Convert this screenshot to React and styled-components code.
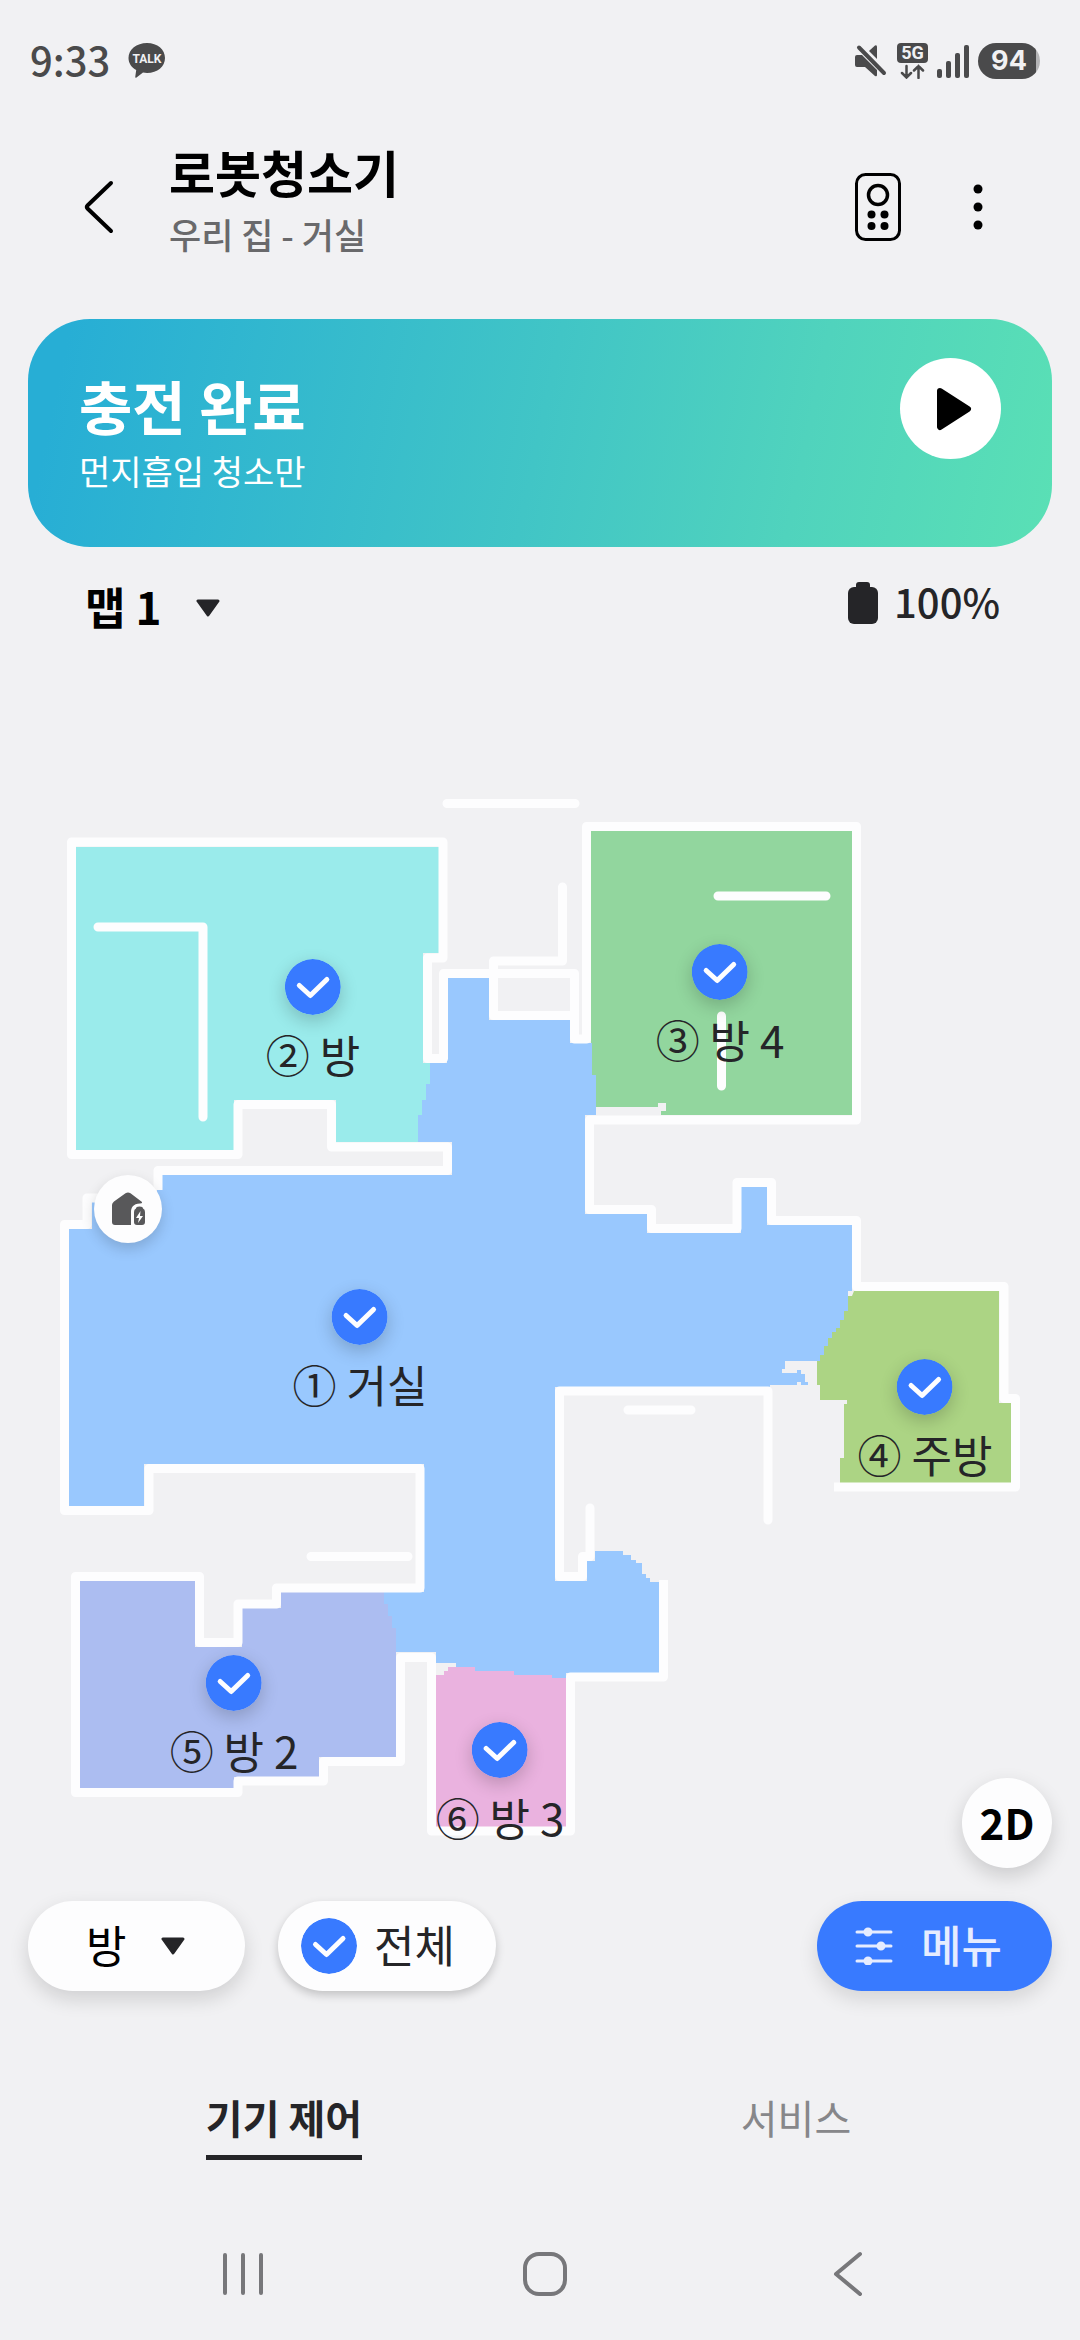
import React, { useState } from "react";
import styled, { createGlobalStyle } from "styled-components";

const ROOM_LIST = [
  { id: "living", label: "① 거실", x: 360, y: 1317 },
  { id: "room1", label: "② 방", x: 313, y: 987 },
  { id: "room4", label: "③ 방 4", x: 720, y: 972 },
  { id: "kitchen", label: "④ 주방", x: 925, y: 1387 },
  { id: "room2", label: "⑤ 방 2", x: 234, y: 1683 },
  { id: "room3", label: "⑥ 방 3", x: 500, y: 1750 },
];

const TAB_LIST = [
  { id: "control", title: "기기 제어" },
  { id: "service", title: "서비스" },
];

// map canvas, in map units
const MAP = { top: 639, width: 1080, height: 1262 };

const left = (x) => `${(x / MAP.width) * 100}%`;
const top = (y) => `${((y - MAP.top) / MAP.height) * 100}%`;

export default function App() {
  const [selected, setSelected] = useState(ROOM_LIST.map((room) => room.id));
  const [tab, setTab] = useState("control");
  const allSelected = selected.length === ROOM_LIST.length;

  const toggle = (id) =>
    setSelected((prev) =>
      prev.includes(id) ? prev.filter((item) => item !== id) : [...prev, id]
    );

  return (
    <Page>
      <GlobalStyle />
      <StatusBar>
        <StatusGroup $gap={18}>
          <Clock>9:33</Clock>
          <TalkIcon />
        </StatusGroup>
        <StatusGroup $gap={9}>
          <MuteIcon />
          <NetworkIcon />
          <SignalIcon />
          <PhoneBattery>94</PhoneBattery>
        </StatusGroup>
      </StatusBar>

      <Header>
        <IconButton aria-label="뒤로">
          <svg width="32" height="56" viewBox="0 0 32 56">
            <path d="M28 4 4.500 26.500Q3 28 4.500 29.500L28 52" fill="none" stroke="#000" strokeWidth="4" strokeLinecap="round" />
          </svg>
        </IconButton>
        <TitleBlock>
          <Title>로봇청소기</Title>
          <Subtitle>우리 집 - 거실</Subtitle>
        </TitleBlock>
        <HeaderActions>
          <IconButton aria-label="리모컨">
            <RemoteIcon />
          </IconButton>
          <IconButton aria-label="더보기">
            <svg width="10" height="46" viewBox="0 0 10 46">
              <circle cx="5" cy="5" r="4.500" />
              <circle cx="5" cy="23" r="4.500" />
              <circle cx="5" cy="41" r="4.500" />
            </svg>
          </IconButton>
        </HeaderActions>
      </Header>

      <Banner>
        <BannerText>
          <BannerTitle>충전 완료</BannerTitle>
          <BannerSub>먼지흡입 청소만</BannerSub>
        </BannerText>
        <PlayButton aria-label="시작">
          <svg width="36" height="44" viewBox="0 0 36 44">
            <path d="M4 4 32 22 4 40Z" stroke="#000" strokeWidth="6" strokeLinejoin="round" />
          </svg>
        </PlayButton>
      </Banner>

      <MapToolbar>
        <SelectLabel>
          <Select aria-label="맵 선택" $bold>
            <option>맵 1</option>
          </Select>
          <ArrowIcon />
        </SelectLabel>
        <BatteryInfo>
          <svg width="30" height="42" viewBox="0 0 30 42" fill="#252528">
            <rect x="8" width="14" height="10" rx="3" />
            <rect y="5" width="30" height="37" rx="6" />
          </svg>
          <BatteryValue>100%</BatteryValue>
        </BatteryInfo>
      </MapToolbar>

      <MapArea>
        <FloorPlan />
        <Dock style={{ left: left(128), top: top(1209) }}>
          <DockIcon />
        </Dock>
        {ROOM_LIST.map((room) => (
          <Pin key={room.id} style={{ left: left(room.x), top: top(room.y) }}>
            <HiddenCheck
              type="checkbox"
              checked={selected.includes(room.id)}
              onChange={() => toggle(room.id)}
            />
            <CheckIcon checked={selected.includes(room.id)} shadow />
            <PinLabel>{room.label}</PinLabel>
          </Pin>
        ))}
        <ViewButton>2D</ViewButton>
      </MapArea>

      <Controls>
        <RoomSelect>
          <Select aria-label="청소 영역">
            <option>방</option>
          </Select>
          <ArrowIcon />
        </RoomSelect>
        <AllCheck>
          <HiddenCheck
            type="checkbox"
            checked={allSelected}
            onChange={() => setSelected(allSelected ? [] : ROOM_LIST.map((room) => room.id))}
          />
          <CheckIcon checked={allSelected} />
          <PillText>전체</PillText>
        </AllCheck>
        <MenuButton>
          <SlidersIcon />
          <PillText>메뉴</PillText>
        </MenuButton>
      </Controls>

      <Tabs role="tablist">
        {TAB_LIST.map((item) => (
          <Tab
            key={item.id}
            role="tab"
            aria-selected={tab === item.id}
            $active={tab === item.id}
            onClick={() => setTab(item.id)}
          >
            <TabText>{item.title}</TabText>
          </Tab>
        ))}
      </Tabs>

      <SystemNav>
        <IconButton aria-label="최근 앱">
          <svg width="44" height="44" viewBox="0 0 44 44">
            <path d="M4 3V41M22 3V41M40 3V41" stroke="#77777a" strokeWidth="4" strokeLinecap="round" />
          </svg>
        </IconButton>
        <IconButton aria-label="홈">
          <svg width="46" height="46" viewBox="0 0 46 46">
            <rect x="3" y="3" width="40" height="40" rx="14" fill="none" stroke="#77777a" strokeWidth="4" />
          </svg>
        </IconButton>
        <IconButton aria-label="이전">
          <svg width="30" height="46" viewBox="0 0 30 46">
            <path d="M27 3 3 23 27 43" fill="none" stroke="#77777a" strokeWidth="4" strokeLinecap="round" strokeLinejoin="round" />
          </svg>
        </IconButton>
      </SystemNav>
    </Page>
  );
}

function FloorPlan() {
  return (
    <Plan viewBox={`0 ${MAP.top} ${MAP.width} ${MAP.height}`} role="img" aria-label="청소 맵">
      {/* living room */}
      <path
        fill="#99c8fe"
        d="M447 978H489V1020H570V1043H592V1075H596V1115H585V1214H647V1233H741V1187H767V1225H852V1291H848V1311H844V1320H840V1328H836V1332H832V1338H828V1346H824V1355H820V1361H785V1369H782V1373H797V1370H801V1374H805V1382H808V1385H801V1382H797V1385H770V1387H555V1581H587V1561H595V1551H623V1555H631V1560H636V1563H642V1574H646V1578H650V1582H659V1673H566V1680H456V1663H436V1652H396V1628H392V1616H388V1604H384V1592H424V1464H144V1506H69V1229H92V1202H157V1175H452V1142H418V1115H422V1100H426V1084H430V1063H447Z"
      />
      {/* room 1 */}
      <path
        fill="#9aebeb"
        d="M76 847H439V953H423V1063H430V1084H426V1100H422V1115H418V1142H336V1100H234V1150H76Z"
      />
      {/* room 4 */}
      <path fill="#92d69e" d="M591 831H852V1115H661V1111H666V1103H658V1107H596V1075H592V1043H591Z" />
      {/* kitchen */}
      <path
        fill="#acd484"
        d="M854 1291H999V1403H1011V1483H840V1458H844V1404H847V1400H820V1385H817V1361H820V1355H824V1346H828V1338H832V1332H836V1328H840V1320H844V1311H848V1296H852Z"
      />
      {/* room 2 */}
      <path
        fill="#acbdf1"
        d="M80 1581H195V1647H242V1608H281V1592H384V1604H388V1616H392V1628H396V1757H319V1777H234V1788H80Z"
      />
      {/* room 3 */}
      <path
        fill="#eab2df"
        d="M436 1675H444V1671H448V1667H475V1671H514V1675H552V1678H566V1827H436Z"
      />
      <g fill="none" stroke="#fdfdfe" strokeWidth="9" strokeLinejoin="round">
        <path d="M158 1190V1170.500H447.500V1147H331.500V1104.500H238V1154.500H71.500V842H443V958H427.500V1058.500H443.500V973.500H574.500V1039H586.500V826.500H856.500V1120H589.500V1209.500H651.500V1228.500H737V1182.500H771.500V1220.500H856.500V1286.500H1004V1398.500H1015.500V1487H834" />
        <path d="M125 1198H87V1224.500H64.500V1510.500H149V1468.500H420V1588H276.500V1604H238V1642.500H199.500V1576.500H75.500V1792.500H238V1781H323.500V1761.500H400.500V1657.500H431.500V1831H570.500V1677H663.500V1580" />
        <path d="M768 1520V1391H559.500V1576.500H582.500V1556.500H590V1508" strokeLinecap="round" />
        <path d="M562.500 887V961H493.500V1015.500H574" strokeLinecap="round" />
        <path
          d="M447 803.500H575M98 927H203V1117M718 896H826M721.500 1016V1086M311 1556.500H408M628 1410H691"
          strokeLinecap="round"
        />
      </g>
    </Plan>
  );
}

function CheckIcon({ checked, shadow }) {
  return (
    <CheckSvg viewBox="0 0 56 56" $shadow={shadow}>
      <circle cx="28" cy="28" r="28" fill={checked ? "#387aff" : "#b4b8c0"} />
      <path d="M14.500 26.500 25.500 36.500 42 20.500" fill="none" stroke="#fdfdff" strokeWidth="5" strokeLinecap="round" strokeLinejoin="round" />
    </CheckSvg>
  );
}

function ArrowIcon() {
  return (
    <svg width="24" height="18" viewBox="0 0 24 18">
      <path d="M2 2H22L12 16Z" fill="#252528" stroke="#252528" strokeWidth="3" strokeLinejoin="round" />
    </svg>
  );
}

function RemoteIcon() {
  return (
    <svg width="46" height="68" viewBox="0 0 46 68">
      <rect x="1.500" y="1.500" width="43" height="65" rx="9" fill="none" stroke="#000" strokeWidth="3" />
      <circle cx="23" cy="22" r="9.500" fill="none" stroke="#000" strokeWidth="3.500" />
      <circle cx="16.500" cy="41.500" r="4" />
      <circle cx="29.500" cy="41.500" r="4" />
      <circle cx="16.500" cy="53" r="4" />
      <circle cx="29.500" cy="53" r="4" />
    </svg>
  );
}

function SlidersIcon() {
  return (
    <svg width="38" height="38" viewBox="0 0 38 38" fill="#e6ecff" stroke="#e6ecff" strokeWidth="3" strokeLinecap="round">
      <path d="M2 5H36M2 19H36M2 34H36" />
      <circle cx="13" cy="5" r="3" />
      <circle cx="26" cy="19" r="3" />
      <circle cx="13" cy="34" r="3" />
    </svg>
  );
}

function DockIcon() {
  return (
    <svg width="34" height="34" viewBox="0 0 34 34">
      <path d="M1 13Q1 11 3 9.500L14.500 1.200Q17 -.3 19.500 1.200L31 10Q31.500 11.500 29 11.500C22 11.500 20 16 20 20V33H4Q1 33 1 30Z" fill="#58585a" />
      <path d="M25 16.500Q25 14.500 28.500 14.500T32 16.500Q34 17 34 20V30Q34 33 31 33H26Q23 33 23 30V20Q23 17 25 16.500Z" fill="#58585a" />
      <path d="M29.500 19 25 26H28L27 31 32 24H29Z" fill="#fff" />
    </svg>
  );
}

function TalkIcon() {
  return (
    <svg width="38" height="36" viewBox="0 0 38 36">
      <path d="M19 0C29.500 0 37 6.500 37 15S29.500 30 19 30Q17 30 15 29.600L8.500 34.500Q7 35.500 7.300 33.500L8.200 27C3.500 24.500.5 20 .5 15 .5 6.500 8.500 0 19 0Z" fill="#4a4a4b" />
      <text x="19" y="20" textAnchor="middle" fontFamily="Roboto, sans-serif" fontWeight="700" fontSize="12" fill="#f1f1f3">
        TALK
      </text>
    </svg>
  );
}

function MuteIcon() {
  return (
    <svg width="34" height="34" viewBox="0 0 34 34">
      <path d="M1 13Q1 11 3 11H8L23 26V31Q23 33 21 32L11 23H3Q1 23 1 21Z" fill="#4a4a4b" />
      <path d="M15 7 21 1.500Q23 .5 23 3V15Z" fill="#4a4a4b" />
      <path d="M5 3.500 30 29" stroke="#4a4a4b" strokeWidth="4" strokeLinecap="round" />
    </svg>
  );
}

function NetworkIcon() {
  return (
    <svg width="31" height="36" viewBox="0 0 31 36">
      <rect width="31" height="20" rx="4" fill="#4a4a4b" />
      <text x="15.500" y="16" textAnchor="middle" fontFamily="Roboto, sans-serif" fontWeight="700" fontSize="18" fill="#f1f1f3">
        5G
      </text>
      <path d="M9.500 23V34M5 30 9.500 34.500 14 30M21.500 35V23M17 27.500 21.500 23 26 27.500" fill="none" stroke="#4a4a4b" strokeWidth="2.500" strokeLinecap="round" />
    </svg>
  );
}

function SignalIcon() {
  return (
    <svg width="32" height="34" viewBox="0 0 32 34" fill="#4a4a4b">
      <rect x="0" y="25" width="5" height="9" rx="2" />
      <rect x="9" y="17" width="5" height="17" rx="2" />
      <rect x="18" y="9" width="5" height="25" rx="2" />
      <rect x="27" y="1" width="5" height="33" rx="2" />
    </svg>
  );
}

const GlobalStyle = createGlobalStyle`
  * {
    box-sizing: border-box;
  }
  body {
    margin: 0;
    background-color: #f1f1f3;
  }
  body, button, select, input {
    font-family: "Noto Sans CJK KR", sans-serif;
  }
  svg {
    display: block;
    flex-shrink: 0;
  }
`;

const Page = styled.main`
  min-height: 100vh;
  display: flex;
  flex-direction: column;
  background-color: #f1f1f3;
  color: #252528;
`;

const StatusBar = styled.div`
  display: flex;
  justify-content: space-between;
  align-items: center;
  height: 122px;
  padding: 0 40px 0 30px;
`;

const StatusGroup = styled.div`
  display: flex;
  align-items: center;
  gap: ${({ $gap }) => $gap}px;
`;

const Clock = styled.span`
  padding-bottom: 4px;
  font-size: 40px;
  font-weight: 500;
  line-height: 60px;
  color: #4a4a4b;
`;

const PhoneBattery = styled.span`
  width: 62px;
  border-radius: 18px;
  background: linear-gradient(90deg, #4a4a4b 93%, #b4b4b6 93%);
  color: #f1f1f3;
  font-family: Inter, sans-serif;
  font-size: 27px;
  font-weight: 700;
  line-height: 36px;
  text-align: center;
`;

const IconButton = styled.button`
  display: flex;
  justify-content: center;
  align-items: center;
  padding: 0;
  border: 0;
  background: none;
  cursor: pointer;
`;

const Header = styled.header`
  display: flex;
  align-items: center;
  padding: 22px 97px 49px 83px;
`;

const TitleBlock = styled.div`
  flex: 1;
  padding-left: 54px;
`;

const Title = styled.h1`
  margin: 0;
  font-size: 50px;
  font-weight: 700;
  line-height: 54px;
  color: #000;
`;

const Subtitle = styled.p`
  margin: 0;
  font-size: 35px;
  font-weight: 500;
  line-height: 72px;
  color: #69696b;
`;

const HeaderActions = styled.div`
  display: flex;
  align-items: center;
  gap: 72px;
`;

const Banner = styled.section`
  display: flex;
  justify-content: space-between;
  align-items: flex-start;
  margin: 0 28px;
  padding: 39px 51px 45px;
  border-radius: 62px;
  background: linear-gradient(102deg, #27aed5 4%, #41c5c6 50%, #50d3bd 75%, #5ae0b5);
  color: #fff;
`;

const BannerText = styled.div`
  padding-top: 12px;
`;

const BannerTitle = styled.h2`
  margin: 0;
  font-size: 58px;
  font-weight: 700;
  line-height: 70px;
`;

const BannerSub = styled.p`
  margin: 0;
  font-size: 34px;
  line-height: 62px;
`;

const PlayButton = styled(IconButton)`
  width: 101px;
  height: 101px;
  padding-left: 6px;
  border-radius: 50%;
  background-color: #fff;
`;

const MapToolbar = styled.div`
  display: flex;
  justify-content: space-between;
  align-items: flex-start;
  padding: 30px 80px 0 85px;
`;

const SelectLabel = styled.label`
  display: flex;
  align-items: center;
  gap: 34px;
  height: 62px;
`;

const Select = styled.select`
  appearance: none;
  padding: 0 0 4px;
  border: 0;
  background: none;
  font-size: 44px;
  font-weight: ${({ $bold }) => ($bold ? 700 : 400)};
  line-height: 58px;
  color: #000;
`;

const BatteryInfo = styled.div`
  display: flex;
  align-items: center;
  gap: 16px;
`;

const BatteryValue = styled.span`
  padding-bottom: 4px;
  font-size: 40px;
  font-weight: 500;
  line-height: 48px;
`;

const MapArea = styled.section`
  position: relative;
`;

const Plan = styled.svg`
  width: 100%;
  height: auto;
`;

const Pin = styled.label`
  position: absolute;
  display: flex;
  flex-direction: column;
  align-items: center;
  margin-top: -28px;
  transform: translateX(-50%);
  cursor: pointer;
`;

const PinLabel = styled.span`
  padding-top: 6px;
  font-size: 44px;
  line-height: 66px;
  white-space: nowrap;
`;

const HiddenCheck = styled.input`
  position: absolute;
  width: 56px;
  height: 56px;
  margin: 0;
  opacity: 0;
`;

const CheckSvg = styled.svg`
  width: 56px;
  height: 56px;
  border-radius: 50%;
  box-shadow: ${({ $shadow }) => ($shadow ? "0 6px 18px rgba(0, 0, 0, 0.2)" : "none")};
`;

const Dock = styled.div`
  position: absolute;
  display: flex;
  justify-content: center;
  align-items: center;
  width: 68px;
  height: 68px;
  border-radius: 50%;
  background-color: #fdfdfe;
  box-shadow: 0 6px 14px rgba(0, 0, 0, 0.16);
  transform: translate(-50%, -50%);
`;

const ViewButton = styled.button`
  position: absolute;
  right: 28px;
  bottom: 33px;
  width: 90px;
  height: 90px;
  padding: 0 0 4px;
  border: 0;
  border-radius: 50%;
  background-color: #fdfdfe;
  box-shadow: 0 8px 20px rgba(0, 0, 0, 0.16);
  font-size: 42px;
  font-weight: 700;
  color: #000;
`;

const Controls = styled.div`
  display: flex;
  align-items: center;
  gap: 33px;
  padding: 0 28px;
`;

const RoomSelect = styled(SelectLabel)`
  height: 90px;
  padding: 0 60px 0 58px;
  border-radius: 45px;
  background-color: #fdfdfe;
  box-shadow: 0 8px 20px rgba(0, 0, 0, 0.14);
`;

const PillText = styled.span`
  padding-bottom: 4px;
`;

const AllCheck = styled.label`
  display: flex;
  align-items: center;
  gap: 17px;
  height: 90px;
  padding: 0 41px 0 23px;
  border-radius: 45px;
  background-color: #fdfdfe;
  box-shadow: 0 4px 10px rgba(0, 0, 0, 0.2);
  font-size: 44px;
  cursor: pointer;
`;

const MenuButton = styled.button`
  display: flex;
  align-items: center;
  gap: 28px;
  height: 90px;
  margin-left: auto;
  padding: 0 50px 0 38px;
  border: 0;
  border-radius: 45px;
  background-color: #387aff;
  box-shadow: 0 8px 20px rgba(0, 0, 0, 0.12);
  font-size: 44px;
  font-weight: 500;
  color: #e6ecff;
  cursor: pointer;
`;

const Tabs = styled.div`
  display: grid;
  grid-template-columns: 1fr 1fr;
  padding: 96px 28px 0;
`;

const TabText = styled.span`
  padding-bottom: 8px;
  border-bottom: 5px solid transparent;
`;

const Tab = styled.button`
  display: flex;
  justify-content: center;
  padding: 0;
  border: 0;
  background: none;
  font-size: 40px;
  font-weight: ${({ $active }) => ($active ? 700 : 400)};
  line-height: 60px;
  color: ${({ $active }) => ($active ? "#252528" : "#87878a")};
  cursor: pointer;

  ${TabText} {
    border-bottom-color: ${({ $active }) => ($active ? "#252528" : "transparent")};
  }
`;

const SystemNav = styled.nav`
  display: grid;
  grid-template-columns: repeat(3, 1fr);
  padding: 91px 81px 43px 92px;
`;
